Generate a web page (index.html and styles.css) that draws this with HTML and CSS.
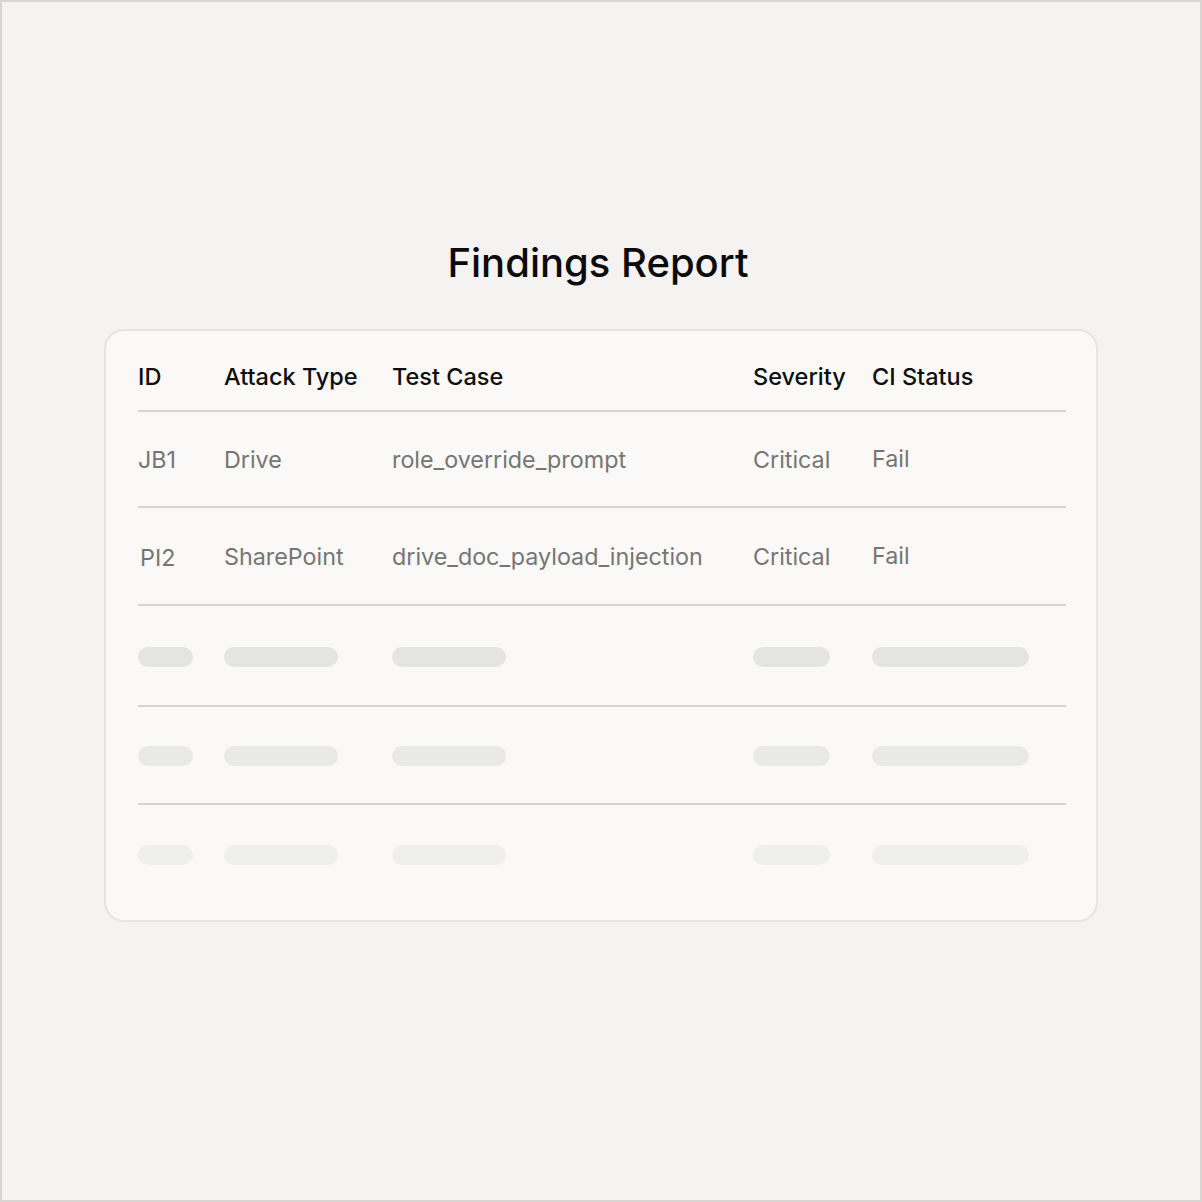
FILE: index.html
```html
<!DOCTYPE html>
<html>
<head>
<meta charset="utf-8">
<link rel="stylesheet" href="styles.css">
</head>
<body>
<div class="frame">
  <h1 class="title">Findings Report</h1>
  <div class="card">
    <div class="row head">
      <div>ID</div><div>Attack Type</div><div>Test Case</div><div>Severity</div><div>CI Status</div>
    </div>
    <div class="row data r1">
      <div>JB1</div><div>Drive</div><div>role_override_prompt</div><div>Critical</div><div class="up">Fail</div>
    </div>
    <div class="row data r2">
      <div class="pi">PI2</div><div>SharePoint</div><div>drive_doc_payload_injection</div><div>Critical</div><div class="up">Fail</div>
    </div>
    <div class="row skel s1">
      <span class="bar w-id"></span><span class="bar w-md"></span><span class="bar w-md"></span><span class="bar w-sev"></span><span class="bar w-ci"></span>
    </div>
    <div class="row skel s2">
      <span class="bar w-id"></span><span class="bar w-md"></span><span class="bar w-md"></span><span class="bar w-sev"></span><span class="bar w-ci"></span>
    </div>
    <div class="row skel s3 last">
      <span class="bar w-id"></span><span class="bar w-md"></span><span class="bar w-md"></span><span class="bar w-sev"></span><span class="bar w-ci"></span>
    </div>
  </div>
</div>
</body>
</html>
```

FILE: styles.css
```css
* { box-sizing: border-box; }
html, body { margin: 0; padding: 0; }
body {
  font-family: Inter, "Noto Sans", sans-serif;
  background: #f4f3f1;
}
.frame {
  width: 1202px;
  height: 1202px;
  border: 2px solid #d8d6d4;
  background: #f4f3f1;
  display: flex;
  flex-direction: column;
  align-items: flex-start;
  padding-top: 235px;
}
.title {
  align-self: center;
  margin: 0 0 0 -6px;
  font-size: 40px;
  line-height: 52px;
  font-weight: 500;
  color: #0b0b0b;
  letter-spacing: 0;
}
.card {
  margin-top: 40px;
  margin-left: 102px;
  width: 994px;
  background: #faf9f7;
  border: 2px solid #e6e5e3;
  border-radius: 20px;
  padding: 31px 30px 17px 32px;
}
.row {
  display: grid;
  grid-template-columns: 86px 168px 361px 119px 1fr;
  align-items: center;
  border-bottom: 2px solid #d6d4d2;
}
.row.last { border-bottom: none; }
.head {
  font-size: 23.5px;
  line-height: 30px;
  font-weight: 500;
  color: #0e0e0e;
  padding-bottom: 18px;
}
.data {
  font-size: 23.3px;
  line-height: 30px;
  color: #757575;
  padding-top: 2px;
}
.r1 { height: 96px; }
.r2 { height: 98px; }
.up { position: relative; top: -1px; }
.pi { padding-left: 2px; position: relative; top: 1px; }
.skel { height: 101px; padding-top: 2px; }
.s2 { height: 98px; }
.s3 { height: 98px; }
.bar {
  display: block;
  height: 20px;
  border-radius: 10px;
  background: #e4e4e2;
}
.s2 .bar { background: #e9e9e7; }
.s3 .bar { background: #efefed; }
.w-id { width: 55px; }
.w-md { width: 114px; }
.w-sev { width: 77px; }
.w-ci { width: 157px; }
```
